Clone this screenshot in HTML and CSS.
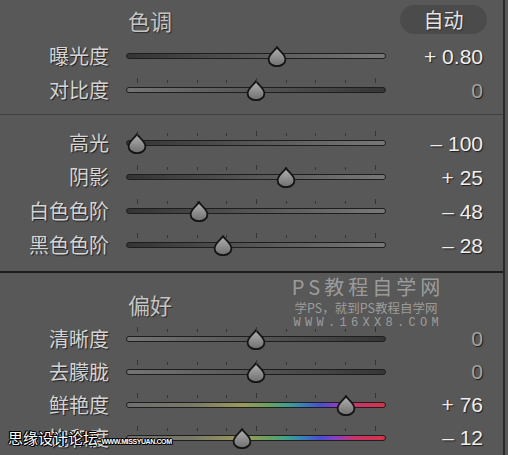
FILE: index.html
```html
<!DOCTYPE html>
<html lang="zh-CN">
<head>
<meta charset="UTF-8" />
<meta name="viewport" content="width=device-width, initial-scale=1" />
<title>基本 - 色调 / 偏好</title>
<link rel="stylesheet" href="styles.css">
</head>
<body>

<svg class="defs" width="0" height="0" aria-hidden="true">
  <defs>
    <linearGradient id="thumb-fill" x1="0" y1="0" x2="0" y2="1">
      <stop offset="0" stop-color="#b2b2b2" />
      <stop offset="1" stop-color="#6e6e6e" />
    </linearGradient>
    <symbol id="thumb" viewBox="0 0 20 21">
      <path d="M10 1.2C11.6 4.4 18.4 8.2 18.4 13.4A8.4 6.8 0 0 1 1.6 13.4C1.6 8.2 8.4 4.4 10 1.2Z" fill="url(#thumb-fill)" stroke="#141414" stroke-width="1.8" />
    </symbol>
  </defs>
</svg>

<div class="panel">

  <!-- 色调 -->
  <div class="section tone">
    <div class="section-head">
      <span class="section-title">色调</span>
      <span class="auto">自动</span>
    </div>
    <div class="row">
      <span class="label">曝光度</span>
      <div class="slider">
        <div class="track dark-light"></div>
        <svg class="thumb" style="left:57.9%"><use href="#thumb" /></svg>
      </div>
      <span class="value">+ 0.80</span>
    </div>
    <div class="row">
      <span class="label">对比度</span>
      <div class="slider ticked">
        <div class="track light-dark"></div>
        <svg class="thumb" style="left:50%"><use href="#thumb" /></svg>
      </div>
      <span class="value zero">0</span>
    </div>
  </div>

  <div class="section light">
    <div class="row">
      <span class="label">高光</span>
      <div class="slider ticked">
        <div class="track dark-light"></div>
        <svg class="thumb" style="left:4.2%"><use href="#thumb" /></svg>
      </div>
      <span class="value">– 100</span>
    </div>
    <div class="row">
      <span class="label">阴影</span>
      <div class="slider ticked">
        <div class="track dark-light"></div>
        <svg class="thumb" style="left:61.4%"><use href="#thumb" /></svg>
      </div>
      <span class="value">+ 25</span>
    </div>
    <div class="row">
      <span class="label">白色色阶</span>
      <div class="slider ticked">
        <div class="track dark-light"></div>
        <svg class="thumb" style="left:28%"><use href="#thumb" /></svg>
      </div>
      <span class="value">– 48</span>
    </div>
    <div class="row">
      <span class="label">黑色色阶</span>
      <div class="slider ticked">
        <div class="track dark-light"></div>
        <svg class="thumb" style="left:37.2%"><use href="#thumb" /></svg>
      </div>
      <span class="value">– 28</span>
    </div>
  </div>

  <!-- 偏好 -->
  <div class="section presence">
    <div class="section-head">
      <span class="section-title">偏好</span>
    </div>
    <div class="row">
      <span class="label">清晰度</span>
      <div class="slider ticked">
        <div class="track light-dark"></div>
        <svg class="thumb" style="left:50%"><use href="#thumb" /></svg>
      </div>
      <span class="value zero">0</span>
    </div>
    <div class="row">
      <span class="label">去朦胧</span>
      <div class="slider ticked">
        <div class="track light-dark"></div>
        <svg class="thumb" style="left:50%"><use href="#thumb" /></svg>
      </div>
      <span class="value zero">0</span>
    </div>
    <div class="row">
      <span class="label">鲜艳度</span>
      <div class="slider ticked">
        <div class="track hue"></div>
        <svg class="thumb" style="left:84.8%"><use href="#thumb" /></svg>
      </div>
      <span class="value">+ 76</span>
    </div>
    <div class="row">
      <span class="label">饱和度</span>
      <div class="slider ticked">
        <div class="track hue"></div>
        <svg class="thumb" style="left:44.5%"><use href="#thumb" /></svg>
      </div>
      <span class="value">– 12</span>
    </div>
  </div>

</div>

<div class="wm-site">
  <div class="wm-name">PS教程自学网</div>
  <div class="wm-slogan">学PS，就到PS教程自学网</div>
  <div class="wm-url">WWW.16XX8.COM</div>
</div>

<div class="wm-forum">思缘设计论坛 <span class="wm-forum-url">WWW.MISSYUAN.COM</span></div>

</body>
</html>
```

FILE: styles.css
```css
body {
  margin: 0;
  background-color: #585858;
  font-family: "Noto Sans CJK SC", sans-serif;
  position: relative;
  height: 455px;
  overflow: hidden;
}
.defs {
  display: block;
  position: absolute;
}
.panel {
  width: 503px;
  height: 455px;
  border-right: 2px solid #2b2b2b;
}
.section {
  padding-right: 20px;
}
.tone {
  padding-bottom: 7px;
  border-bottom: 1px solid #404040;
}
.light {
  padding-top: 11px;
  padding-bottom: 9px;
  border-bottom: 2px solid #1d1d1d;
}
.presence {
  padding-top: 12px;
}
.section-head {
  height: 39px;
  display: flex;
  align-items: center;
  justify-content: space-between;
  padding-left: 128px;
}
.presence .section-head {
  height: 37px;
}
.section-title {
  font-size: 22px;
  line-height: 1;
  color: #c4c4c4;
  text-shadow: 1px 1px 1px #2a2a2a;
}
.auto {
  width: 87px;
  height: 29px;
  margin-right: -4px;
  border-radius: 15px;
  background-color: #4b4b4b;
  color: #e4e4e4;
  font-size: 20px;
  line-height: 29px;
  text-align: center;
  text-shadow: 1px 1px 1px #2a2a2a;
}
.row {
  display: grid;
  grid-template-columns: 109px 260px 1fr;
  column-gap: 17px;
  align-items: center;
  height: 34px;
}
.presence .row {
  height: 33px;
}
.label {
  text-align: right;
  font-size: 20px;
  line-height: 1;
  color: #d4d4d4;
  text-shadow: 1px 1px 1px #202020;
  white-space: nowrap;
}
.value {
  text-align: right;
  font-family: "Liberation Sans", Arial, sans-serif;
  font-size: 21px;
  line-height: 1;
  color: #efefef;
  text-shadow: 1px 1px 1px #1c1c1c;
}
.value.zero {
  color: #a3a3a3;
}
.slider {
  position: relative;
  height: 100%;
}
.track {
  position: absolute;
  left: 0;
  right: 0;
  top: 50%;
  height: 6px;
  margin-top: -3px;
  box-sizing: border-box;
  border: 1px solid #1e1e1e;
  border-radius: 3px;
}
.dark-light {
  background: linear-gradient(to right, #343434, #787878);
}
.light-dark {
  background: linear-gradient(to right, #747474, #363636);
}
.hue {
  background: linear-gradient(to right, #6e6e6e 0%, #797968 25%, #9c9a58 45%, #68a25e 55%, #3fa28e 62%, #3a80b8 68%, #4a4ed0 75%, #8a3ec4 81%, #c8346a 88%, #d83248 100%);
}
.ticked::before,
.ticked::after {
  content: "";
  position: absolute;
  left: 11px;
  width: 239px;
}
.ticked::before {
  top: calc(50% - 10px);
  height: 3px;
  background: repeating-linear-gradient(to right, #353535 0 1px, transparent 1px 29.75px);
}
.ticked::after {
  top: calc(50% - 12px);
  height: 5px;
  background: repeating-linear-gradient(to right, #353535 0 1px, transparent 1px 119px);
}
.thumb {
  position: absolute;
  top: calc(50% - 10px);
  width: 20px;
  height: 21px;
  transform: translateX(-50%);
}
.wm-site {
  position: absolute;
  left: 280px;
  top: 274px;
  width: 172px;
  text-align: center;
  white-space: nowrap;
  color: rgba(200, 200, 200, 0.62);
}
.wm-name {
  font-size: 20px;
  line-height: 26px;
  letter-spacing: 4px;
  margin-right: -4px;
}
.wm-slogan {
  font-size: 12.5px;
  line-height: 16px;
}
.wm-url {
  font-family: "Liberation Mono", monospace;
  font-size: 12px;
  line-height: 15px;
  letter-spacing: 4.3px;
  margin-right: -4.3px;
}
.wm-forum {
  position: absolute;
  left: 8px;
  top: 429px;
  font-size: 15px;
  line-height: 18px;
  color: #fff;
  white-space: nowrap;
  text-shadow: -1px 0 #000, 1px 0 #000, 0 -1px #000, 0 1px #000, 1px 1px #000, -1px -1px #000;
}
.wm-forum-url {
  font-family: "Liberation Sans", Arial, sans-serif;
  font-weight: bold;
  font-size: 7px;
  letter-spacing: -0.4px;
}
```
